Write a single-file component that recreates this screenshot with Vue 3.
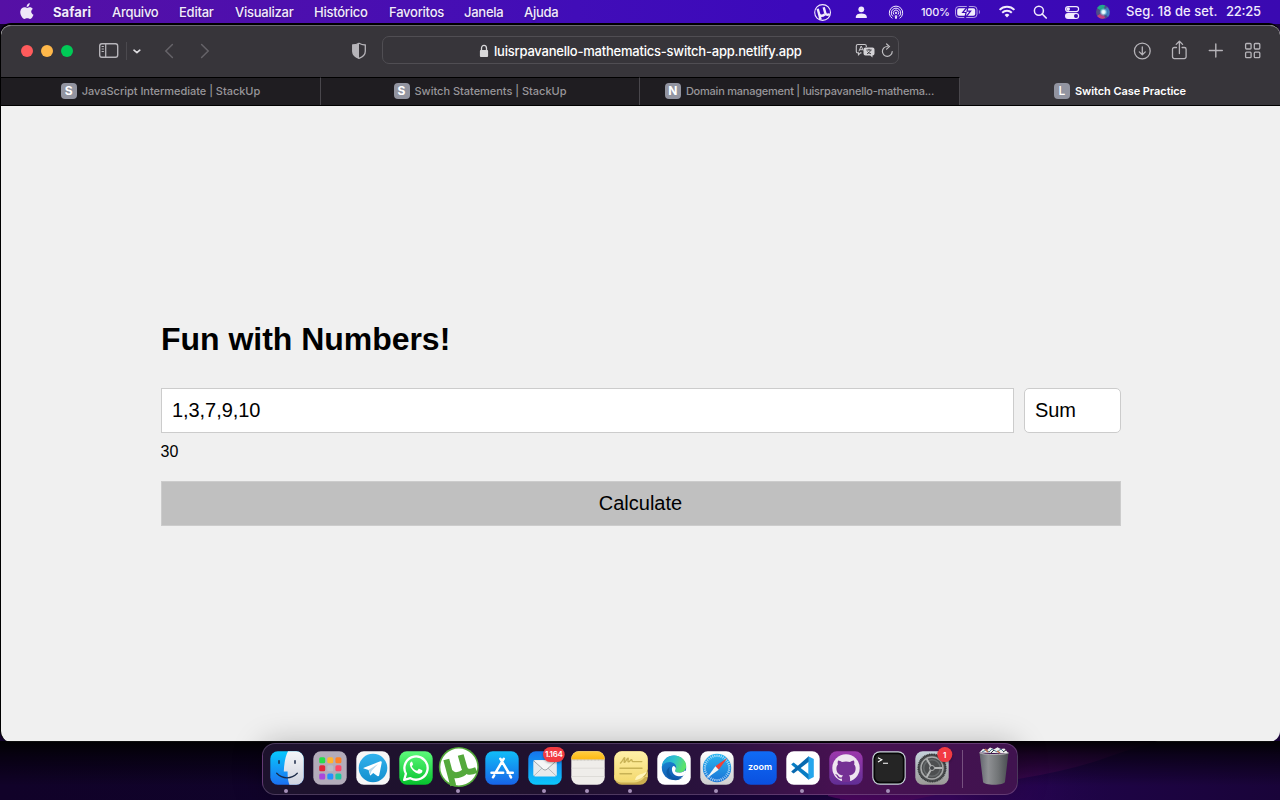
<script setup>
const menus = [
  { label: 'Safari', w: 38, app: true },
  { label: 'Arquivo', w: 46 },
  { label: 'Editar', w: 35 },
  { label: 'Visualizar', w: 58 },
  { label: 'Histórico', w: 54 },
  { label: 'Favoritos', w: 54 },
  { label: 'Janela', w: 39 },
  { label: 'Ajuda', w: 34 },
]
const tabs = [
  { letter: 'S', title: 'JavaScript Intermediate | StackUp', w: 320, ls: -0.03 },
  { letter: 'S', title: 'Switch Statements | StackUp', w: 319, ls: -0.02 },
  { letter: 'N', title: 'Domain management | luisrpavanello-mathema...', w: 319, ls: -0.23 },
  { letter: 'L', title: 'Switch Case Practice', w: 321, ls: -0.07, active: true },
]
const launch = ['#27dc4b', '#ffb52e', '#ff8228', '#e2263a', '#b9bcc4', '#ff4668', '#a948dc', '#2493fc', '#1dc7a0']
const ticks = Array.from({ length: 36 }, (_, i) => i * 10)
</script>

<template>
  <div class="desktop">
    <header class="menubar">
      <svg class="apple" width="14" height="17" viewBox="0 0 14 17">
        <path fill="#eee7f8" d="M9.9 4.3c1.2 0 2.3.7 2.9 1.6-2.4 1.4-2 4.9.7 5.9-.6 1.6-1.8 4.1-3.4 4.2-1.1 0-1.5-.7-2.9-.7-1.300 0-1.800.7-2.800.7C2.400 16-.1 11.600.3 8.400.7 5.700 2.600 4.300 4.500 4.300c1.100 0 2 .7 2.800.7.800 0 1.600-.7 2.600-.7zM9.700 0c.2 2-1.200 3.800-3 3.900C6.500 2 8 .2 9.700 0z" />
      </svg>
      <nav class="menus">
        <span v-for="m in menus" :key="m.label" :class="{ app: m.app }" :style="{ width: m.w + 'px' }">{{ m.label }}</span>
      </nav>
      <div class="status">
        <svg width="466" height="24" viewBox="814 0 466 24" fill="none" stroke="#f1ebfc">
          <circle cx="822.600" cy="12.500" r="7.900" stroke-width="1.100" />
          <path d="M817.700 8.700l2.900 10.900M819 13.800c.8 2.400 3.400 2.500 5.600.7M823.700 7.300l1.600 5.800c.4 1.600 2 2.200 4.400.9" stroke-width="2.400" />
          <g fill="#f1ebfc" stroke="none">
            <circle cx="861.300" cy="9.300" r="2.900" />
            <path d="M855.800 18v-1.200c0-2.200 2.400-3.400 5.500-3.400s5.500 1.200 5.500 3.400V18z" />
          </g>
          <g stroke-width="1">
            <path d="M892.300 18.400a6.700 6.700 0 1 1 7.400 0M892.900 16.400a4.700 4.700 0 1 1 6.200 0M894 14.600a2.700 2.700 0 1 1 4 0" />
            <circle cx="896" cy="12.900" r=".7" fill="#f1ebfc" />
            <path d="M895.200 15.800h1.600l-.4 2.700h-.8z" />
          </g>
          <text class="pct" x="921" y="16.300" textLength="29">100%</text>
          <rect x="955.500" y="6.500" width="21.500" height="11" rx="3.200" stroke-opacity=".65" />
          <rect x="957.200" y="8.200" width="18" height="7.600" rx="1.800" fill="#f1ebfc" stroke="none" />
          <path d="M968.500 5.500l-5.800 7h3.400l-1.500 6 6-7.300H967z" fill="#f1ebfc" stroke="#3b09b4" stroke-width="1.200" />
          <path d="M978.900 10v4c1.400-.4 1.400-3.600 0-4z" fill="#f1ebfc" stroke="none" opacity=".6" />
          <g stroke-width="2">
            <path d="M999.600 9.900a10.300 10.300 0 0 1 14.800 0M1002.200 12.700a6.800 6.800 0 0 1 9.600 0" />
            <path d="M1004.600 14.900a3.300 3.300 0 0 1 4.800 0L1007 17.500z" fill="#f1ebfc" stroke="none" />
          </g>
          <circle cx="1038.900" cy="10.700" r="4.500" stroke-width="1.500" />
          <path d="M1042.200 14l4 4" stroke-width="1.700" stroke-linecap="round" />
          <rect x="1065.600" y="6.600" width="13" height="5" rx="2.500" stroke-width="1.200" />
          <circle cx="1068.200" cy="9.100" r="1.800" fill="#f1ebfc" stroke="none" />
          <rect x="1065" y="13" width="14.200" height="6" rx="3" fill="#f1ebfc" stroke="none" />
          <circle cx="1076" cy="16" r="2" fill="#3b09b4" stroke="none" />
          <defs>
            <radialGradient id="siri"><stop offset="0" stop-color="#fff" /><stop offset=".35" stop-color="#d5f2fa" /><stop offset=".7" stop-color="#5bb0cc" stop-opacity=".5" /><stop offset="1" stop-color="#21325f" stop-opacity="0" /></radialGradient>
          </defs>
          <g stroke="none">
            <circle cx="1103" cy="12" r="7" fill="#4e4d88" />
            <path d="M1103 12l-6-4a7 7 0 0 1 8-2.700z" fill="#22a88e" />
            <path d="M1103 12l4-5a7 7 0 0 1 1 10z" fill="#3f7cc4" />
            <path d="M1103 12l2 6a7 7 0 0 1-8-2z" fill="#c4407f" />
            <circle cx="1103.500" cy="12" r="4.800" fill="url(#siri)" />
          </g>
          <text class="clock" x="1126" y="16.300" textLength="91.500">Seg. 18 de set.</text>
          <text class="clock" x="1226" y="16.300" textLength="35">22:25</text>
        </svg>
      </div>
    </header>

    <main class="window">
      <div class="toolbar">
        <div class="lights"><i class="red" /><i class="amber" /><i class="green" /></div>
        <svg class="left-tools" width="310" height="50" viewBox="80 26 310 50" fill="none" stroke="#b6b4b9">
          <rect x="99.700" y="43.700" width="18" height="13.600" rx="2.200" stroke-width="1.400" />
          <path d="M105.700 44v13" stroke-width="1.300" />
          <path d="M101.600 46.500h2.300M101.600 49h2.300M101.600 51.500h2.300" stroke-width="1" />
          <path d="M126.500 42v18" stroke="#4b494e" />
          <path d="M134 50.200l2.900 2.400 2.900-2.400" stroke="#dddce0" stroke-width="1.700" stroke-linecap="round" stroke-linejoin="round" />
          <path d="M172.400 44.500l-6.600 6.500 6.600 6.500M201.600 44.500l6.600 6.500-6.600 6.500" stroke="#656368" stroke-width="1.500" stroke-linecap="round" />
          <path d="M359 43.300c-1.800 1-3.800 1.600-6.300 1.700v6.200c0 3.500 2.900 5.800 6.300 7.200 3.400-1.400 6.300-3.700 6.300-7.200V45c-2.500-.1-4.500-.7-6.300-1.700z" stroke-width="1.300" />
          <path d="M359 43.300c-1.800 1-3.800 1.600-6.300 1.700v6.200c0 3.500 2.900 5.800 6.300 7.200z" fill="#b6b4b9" stroke="none" />
        </svg>
        <div class="address">
          <svg class="lock" width="10" height="14" viewBox="0 0 10 14"><path d="M2.500 7V4.200a2.500 2.900 0 0 1 5 0V7" fill="none" stroke="#d9d8da" stroke-width="1.300" /><rect x=".9" y="6" width="8.200" height="7" rx="1" fill="#d9d8da" /></svg>
          <span class="url">luisrpavanello-mathematics-switch-app.netlify.app</span>
          <svg class="addr-tools" width="40" height="18" viewBox="855 42 40 18">
            <path d="M857.800 45.500h7a1.500 1.500 0 0 1 1.500 1.500v1M861.500 53.900h-1l-2 1.900v-1.900h-.7a1.500 1.500 0 0 1-1.500-1.500V47a1.500 1.500 0 0 1 1.500-1.500" fill="none" stroke="#c7c6c9" stroke-width="1.100" />
            <path d="M858.900 52.300l2.300-5.300 2 4.500M859.900 50.700h2.600" stroke="#c7c6c9" fill="none" />
            <path d="M865.500 48.500h7a2 2 0 0 1 2 2v4a2 2 0 0 1-2 2v2l-2.300-2h-4.700a2 2 0 0 1-2-2v-4a2 2 0 0 1 2-2z" fill="#d3d2d5" />
            <path d="M866.300 51h5.400M869 49.800V51M867 54.800c2-.8 3-2 3.400-3.600M867.500 52.500c.8 1.200 2 2 3.500 2.300" stroke="#37353a" stroke-width=".9" fill="none" />
            <path d="M887.300 47.500a4.900 4.900 0 1 0 4.900 5M886.600 45l2.800 2.600-2.800 2.500" fill="none" stroke="#c0bfc2" stroke-width="1.200" stroke-linecap="round" />
          </svg>
        </div>
        <svg class="right-tools" width="140" height="50" viewBox="1130 26 140 50" fill="none" stroke="#b6b4b9" stroke-width="1.300" stroke-linecap="round" stroke-linejoin="round">
          <circle cx="1142.300" cy="51" r="7.900" />
          <path d="M1142.300 47v7.600M1139.300 51.900l3 2.900 3-2.900" />
          <path d="M1176.500 47.500h-2.200a1.800 1.800 0 0 0-1.800 1.800v7.500a1.800 1.800 0 0 0 1.800 1.800h10a1.800 1.800 0 0 0 1.800-1.800v-7.500a1.800 1.800 0 0 0-1.800-1.800h-2.200M1179.400 53.500V41.600M1176.200 44.400l3.200-3.100 3.200 3.100" />
          <path d="M1209.300 50.500h13M1215.800 44v13" stroke-width="1.400" />
          <rect x="1245.600" y="43.500" width="5.500" height="5.500" rx="1" /><rect x="1254.300" y="43.500" width="5.500" height="5.500" rx="1" />
          <rect x="1245.600" y="52.200" width="5.500" height="5.500" rx="1" /><rect x="1254.300" y="52.200" width="5.500" height="5.500" rx="1" />
        </svg>
      </div>
      <div class="tabs">
        <div v-for="t in tabs" :key="t.title" class="tab" :class="{ active: t.active }" :style="{ width: t.w + 'px', letterSpacing: t.ls + 'px' }">
          <b class="fav">{{ t.letter }}</b><span>{{ t.title }}</span>
        </div>
      </div>
      <section class="page">
        <h1>Fun with Numbers!</h1>
        <div class="row">
          <div class="field">1,3,7,9,10</div>
          <div class="select">Sum</div>
        </div>
        <p>30</p>
        <div class="calc">Calculate</div>
      </section>
    </main>

    <svg class="glow" width="1280" height="59" viewBox="0 741 1280 59">
      <defs>
        <linearGradient id="mag" gradientUnits="userSpaceOnUse" x1="828" y1="0" x2="1150" y2="0"><stop offset="0" stop-color="#520764" /><stop offset=".55" stop-color="#43085a" /><stop offset="1" stop-color="#2a0548" /></linearGradient>
        <linearGradient id="low" gradientUnits="userSpaceOnUse" x1="950" y1="0" x2="1110" y2="0"><stop offset="0" stop-color="#3a0660" /><stop offset="1" stop-color="#20044a" stop-opacity="0" /></linearGradient>
        <linearGradient id="shade" x1="0" y1="0" x2="0" y2="1"><stop offset="0" stop-color="#000" stop-opacity=".95" /><stop offset=".3" stop-color="#000" stop-opacity=".6" /><stop offset="1" stop-color="#000" stop-opacity="0" /></linearGradient>
      </defs>
      <rect x="840" y="741" width="270" height="59" fill="url(#low)" />
      <path d="M828 796q14 4 24 4h60q70-15 106-21 55-9 90-22 25-9 50-16H830z" fill="url(#mag)" opacity=".9" />
      <rect x="0" y="741" width="1280" height="45" fill="url(#shade)" />
    </svg>

    <footer class="dock">
      <div class="cell open"><svg viewBox="0 0 34 34">
        <defs>
          <linearGradient id="fb" x1="0" y1="0" x2="0" y2="1"><stop offset="0" stop-color="#08c8fd" /><stop offset="1" stop-color="#1c70f0" /></linearGradient>
          <linearGradient id="fw" x1="0" y1="0" x2="0" y2="1"><stop offset="0" stop-color="#f5f6f8" /><stop offset="1" stop-color="#cfd3df" /></linearGradient>
        </defs>
        <rect x=".3" y=".3" width="33.400" height="33.400" rx="7.500" fill="url(#fb)" />
        <path d="M18 .3h8.200a7.500 7.500 0 0 1 7.500 7.500v18.400a7.500 7.500 0 0 1-7.500 7.500h-6.800c-1.400-4-1.900-8-1.800-13.200h-3.800C14 13 15.300 5.500 18 .3z" fill="url(#fw)" />
        <path d="M9 9.700v2.600M25 9.700v2.600" stroke="#1a2a48" stroke-width="1.500" stroke-linecap="round" />
        <path d="M6.700 22.300c6 6 14.600 6 20.600 0" fill="none" stroke="#1a2a48" stroke-width="1.300" stroke-linecap="round" />
      </svg></div>
      <div class="cell"><svg viewBox="0 0 34 34">
        <rect x=".3" y=".3" width="33.400" height="33.400" rx="7.500" fill="#b3acba" />
        <rect v-for="(c, i) in launch" :key="i" :x="6.200 + (i % 3) * 8.100" :y="6.200 + Math.floor(i / 3) * 8.100" width="6" height="6" rx="1.500" :fill="c" />
      </svg></div>
      <div class="cell"><svg viewBox="0 0 34 34">
        <defs><linearGradient id="tg" x1="0" y1="0" x2="0" y2="1"><stop offset="0" stop-color="#32b2ed" /><stop offset="1" stop-color="#148fce" /></linearGradient></defs>
        <rect x=".3" y=".3" width="33.400" height="33.400" rx="7.500" fill="#f7f7f7" />
        <circle cx="17" cy="17" r="14.300" fill="url(#tg)" />
        <path d="M7.800 16.700L24.300 10.300c1-.4 1.700.2 1.400 1.500l-2.500 12.400c-.2 1-1 1.300-1.800.8l-4.200-3.100-2.200 2.200c-.5.5-1 .4-1.100-.4l-1.300-4.800-4.700-1.500c-.8-.2-.8-.5-.1-.7z" fill="#fff" />
        <path d="M12.800 18.700L22 13l-6.500 7-1 3.600z" fill="#b8d8ec" />
      </svg></div>
      <div class="cell"><svg viewBox="0 0 34 34">
        <defs><linearGradient id="wa" x1="0" y1="0" x2="0" y2="1"><stop offset="0" stop-color="#5dfa7b" /><stop offset="1" stop-color="#06c22d" /></linearGradient></defs>
        <rect x=".3" y=".3" width="33.400" height="33.400" rx="7.500" fill="url(#wa)" />
        <path d="M5.200 28.900l1.700-6.200a11.600 11.600 0 1 1 4.500 4.500z" fill="none" stroke="#fff" stroke-width="2.300" stroke-linejoin="round" />
        <path d="M12.900 10.400c-.8 0-2.600 1.600-1.900 4 .9 3.700 4.800 7.500 8.700 8.300 1.800.3 3.500-.8 3.700-2.400.1-.8-.1-.9-.6-1.200l-2.300-1.100c-.5-.2-.8-.2-1.100.2l-1 1.300c-.3.3-.6.3-1 .1-2-.9-3.500-2.200-4.400-3.900-.3-.4-.1-.7.200-1l.7-.9c.2-.3.2-.6.1-.9l-1-2.300c-.1-.2-.4-.2-.1-.2z" fill="#fff" />
      </svg></div>
      <div class="cell open"><svg viewBox="0 0 34 34">
        <circle cx="16.800" cy="16" r="20" fill="#52a839" /><circle cx="16.800" cy="16" r="18.500" fill="#fff" />
        <path d="M4.300 8.500l6.900 26M8 20.500c2 4.800 8.500 4.800 14.500.5M18.700 4l3.700 12.800c1.100 4.200 5.200 5.400 12 2.300" fill="none" stroke="#54a93b" stroke-width="6" />
      </svg></div>
      <div class="cell"><svg viewBox="0 0 34 34">
        <defs><linearGradient id="as" x1="0" y1="0" x2="0" y2="1"><stop offset="0" stop-color="#11bdf8" /><stop offset="1" stop-color="#1764e8" /></linearGradient></defs>
        <rect x=".3" y=".3" width="33.400" height="33.400" rx="7.500" fill="url(#as)" />
        <path d="M15.300 7.700L23.800 22M18.800 7.700l-8.400 14.100M25 24.500l1 1.900M9.200 24.300l-1.200 2M6.500 21.700h11.700M22.600 21.700h5.200" stroke="#fff" stroke-width="2.500" stroke-linecap="round" />
      </svg></div>
      <div class="cell open"><svg viewBox="0 0 34 34">
        <defs><linearGradient id="ml" x1="0" y1="0" x2="0" y2="1"><stop offset="0" stop-color="#1675ed" /><stop offset="1" stop-color="#0cc6fb" /></linearGradient></defs>
        <rect x=".3" y=".3" width="33.400" height="33.400" rx="7.500" fill="url(#ml)" />
        <rect x="5.300" y="9" width="23.500" height="16.500" rx="2" fill="#e8eaec" />
        <path d="M6 24.800l9-8.600M28 24.800l-9-8.600" stroke="#a9aeb3" stroke-width=".8" />
        <path d="M5.700 9.800l9.300 8.400c1.300 1.100 2.700 1.100 4 0l9.400-8.400" stroke="#8e9498" stroke-width=".8" fill="#f5f6f7" />
        <g filter="drop-shadow(0 1px 1px #0005)"><rect x="15" y="-3.900" width="21.700" height="14.800" rx="7.400" fill="#f23b42" /></g>
        <text x="25.900" y="6.300" textLength="18" class="badge">1.164</text>
      </svg></div>
      <div class="cell open"><svg viewBox="0 0 34 34">
        <defs><linearGradient id="nt" x1="0" y1="0" x2="0" y2="1"><stop offset="0" stop-color="#ffce42" /><stop offset="1" stop-color="#fdb812" /></linearGradient></defs>
        <rect x=".3" y=".3" width="33.400" height="33.400" rx="7.500" fill="#efedea" />
        <path d="M.3 8.500V7.800A7.500 7.500 0 0 1 7.800.3h18.400a7.500 7.500 0 0 1 7.500 7.500v.7z" fill="url(#nt)" />
        <path d="M.5 9h33" stroke="#a5a29a" stroke-width=".8" stroke-dasharray=".8 .6" />
        <path d="M.5 17.200h33M.5 25.500h33" stroke="#d9d7d3" stroke-width=".8" />
      </svg></div>
      <div class="cell open"><svg viewBox="0 0 34 34">
        <defs><linearGradient id="st" x1="0" y1="0" x2="0" y2="1"><stop offset="0" stop-color="#fff0a8" /><stop offset="1" stop-color="#f4da71" /></linearGradient></defs>
        <rect x=".3" y=".3" width="33.400" height="33.400" rx="7.500" fill="#cbae50" />
        <path d="M.3 24v4.500C3 31 6 31.500 9 31.500h11C27 31 32 27 33.700 20v6" fill="#ead579" />
        <path d="M.3 7.800A7.500 7.500 0 0 1 7.800.3h18.400a7.500 7.500 0 0 1 7.500 7.500V18c-2 6-7 11-14 11.500H7.500c-3.500 0-6-.8-7.200-3z" fill="url(#st)" />
        <path d="M21 29c1-4 3-5 8-6.500l4-2c-2 4-6 8-12 8.500z" fill="#fff3b9" />
        <path d="M6.500 12c2-1.500 3.200-5.300 4-5.300s-1 4.700 0 4.700c1.100 0 2.500-4.300 3.500-4.300.8 0-.8 3.800.5 3.800 1.300 0 2-2.300 2.900-2.300.8 0 .4 2 1.400 2h9M6 17.200h22M6 22.700h11.500" stroke="#c8b255" fill="none" stroke-width="1.400" stroke-linecap="round" />
      </svg></div>
      <div class="cell"><svg viewBox="0 0 34 34">
        <defs>
          <linearGradient id="e1" x1="0" y1="0" x2="1" y2=".3"><stop offset="0" stop-color="#1e9fe0" /><stop offset=".55" stop-color="#2fc5ca" /><stop offset="1" stop-color="#5be26b" /></linearGradient>
          <linearGradient id="e2" x1="0" y1="0" x2=".3" y2="1"><stop offset="0" stop-color="#1c8fdd" /><stop offset="1" stop-color="#115bb0" /></linearGradient>
        </defs>
        <rect x=".3" y=".3" width="33.400" height="33.400" rx="7.500" fill="#fff" />
        <circle cx="17" cy="16.800" r="12.200" fill="url(#e2)" />
        <path d="M4.800 16.500C4.900 9.500 10.300 4.600 17 4.600c7.200 0 12.200 5 12.200 10.500 0 4.100-3.200 6.600-6.700 6.600-4.200 0-5-1.600-4-2.900 1.700-2.500.4-6.500-4-7.500-4.500-1-8.700 1.600-9.700 5.200z" fill="url(#e1)" />
        <path d="M18.500 18.800c-1 1.300-.2 2.900 4 2.900 2.300 0 4-.9 5.300-2.200l1.500.6c-.5 1.700-1.400 3.200-2.600 4.500-4 1.800-11.800.5-11.800-6.400 0-1.400.6-2.600 1.500-3.200 2 .6 3 2.200 2.100 3.800z" fill="#fff" />
        <path d="M13 16c-2.300 3.800 0 10.700 7 11.700 2 .3 4-.3 5.700-1.400-4.500 4.300-11.200 3.300-14.300-.3-3-3.500-2.400-8 1.600-10z" fill="#0c59a4" />
      </svg></div>
      <div class="cell open"><svg viewBox="0 0 34 34">
        <defs><linearGradient id="sf" x1="0" y1="0" x2="0" y2="1"><stop offset="0" stop-color="#29b6f0" /><stop offset="1" stop-color="#1b72d6" /></linearGradient>
        <linearGradient id="sb" x1="0" y1="0" x2="0" y2="1"><stop offset="0" stop-color="#fff" /><stop offset="1" stop-color="#cecece" /></linearGradient></defs>
        <rect x=".3" y=".3" width="33.400" height="33.400" rx="7.500" fill="url(#sb)" />
        <circle cx="17" cy="17" r="14.200" fill="url(#sf)" />
        <path v-for="a in ticks" :key="a" d="M17 3.700v2.200" stroke="#e8f6ff" stroke-width=".8" :transform="`rotate(${a} 17 17)`" />
        <path d="M27.500 6.700L15.400 15.200l3.300 3.500z" fill="#f04137" /><path d="M6.500 27.500l8.900-12.300 3.300 3.500z" fill="#f3f5f6" />
      </svg></div>
      <div class="cell"><svg viewBox="0 0 34 34">
        <defs><linearGradient id="zm" x1="0" y1="0" x2="0" y2="1"><stop offset="0" stop-color="#106bf5" /><stop offset="1" stop-color="#0a50df" /></linearGradient></defs>
        <rect x=".3" y=".3" width="33.400" height="33.400" rx="7.500" fill="url(#zm)" />
        <text x="5" y="19.400" textLength="24" lengthAdjust="spacingAndGlyphs" class="zoom">zoom</text>
      </svg></div>
      <div class="cell open"><svg viewBox="0 0 34 34">
        <rect x=".3" y=".3" width="33.400" height="33.400" rx="7.500" fill="#fff" />
        <path d="M22.300 5.300L27.800 8v18l-5.500 2.700z" fill="#25a6ec" />
        <path d="M5.600 13l2-1.600 15.100 11.800v5.500L5.500 13.700c-.3-.2-.3-.5.1-.7z" fill="#087dc4" />
        <path d="M5.600 21l2 1.600 15.100-11.800V5.300L5.500 20.300c-.3.2-.3.500.1.7z" fill="#0869b0" />
      </svg></div>
      <div class="cell"><svg viewBox="0 0 34 34">
        <defs><linearGradient id="gh" x1="0" y1="0" x2="0" y2="1"><stop offset="0" stop-color="#9c38ac" /><stop offset="1" stop-color="#612e94" /></linearGradient></defs>
        <rect x=".3" y=".3" width="33.400" height="33.400" rx="7.500" fill="url(#gh)" />
        <circle cx="17" cy="17" r="13.700" fill="#eee5f0" />
        <path d="M12.900 31v-3.400c-3.200.7-4.200-.6-5.100-2.600-.4-.8-1-1.200-1.600-1.600 1.800-.3 2.600.8 3.300 1.800 1 1.400 2 1.600 3.500 1.100.1-.9.6-1.600 1.100-2-4.300-.5-6.700-2.600-6.700-6.900 0-1.600.5-2.900 1.500-3.900-.3-.9-.5-2.400.2-4.100 1.500 0 2.800.8 3.900 1.600 2.500-.7 5.500-.7 8 0 1.100-.8 2.400-1.600 3.900-1.600.7 1.700.5 3.200.2 4.100 1 1 1.500 2.300 1.500 3.900 0 4.300-2.400 6.400-6.700 6.900.7.600 1.200 1.700 1.200 3.300V31z" fill="#743094" />
      </svg></div>
      <div class="cell open"><svg viewBox="0 0 34 34">
        <rect x=".3" y=".3" width="33.400" height="33.400" rx="7.500" fill="#c9d5da" />
        <rect x="1.400" y="1.400" width="31.200" height="31.200" rx="6.500" fill="#060606" />
        <rect x="3.200" y="3.200" width="27.600" height="27.600" rx="5" fill="#252525" />
        <path d="M6 6.700l3.800 2.100L6 10.900M11 12.300h5" stroke="#fff" stroke-width="1.100" fill="none" />
      </svg></div>
      <div class="cell"><svg viewBox="0 0 34 34">
        <defs><linearGradient id="sy" x1="0" y1="0" x2="0" y2="1"><stop offset="0" stop-color="#c6d3dc" /><stop offset="1" stop-color="#9b9a97" /></linearGradient></defs>
        <rect x=".3" y=".3" width="33.400" height="33.400" rx="7.500" fill="url(#sy)" />
        <circle cx="17" cy="17" r="14" fill="#4d4f50" />
        <circle cx="17" cy="17" r="13.700" fill="none" stroke="#35383a" stroke-width="1.800" stroke-dasharray="1 .7" />
        <circle cx="17" cy="17" r="11" fill="none" stroke="#a7a9a9" stroke-width="1.500" />
        <circle cx="17" cy="17" r="8.300" fill="none" stroke="#666a6b" stroke-width="1.500" />
        <path d="M17 17h10.500M17 17l-5.300-9M17 17l-5.300 9" stroke="#b3b5b5" stroke-width="1.900" />
        <circle cx="17" cy="17" r="2.500" fill="#404345" stroke="#aeb0b0" />
        <g filter="drop-shadow(0 1px 1px #0005)"><circle cx="29.800" cy="3.600" r="7.500" fill="#f23b42" /></g>
        <text x="29.800" y="6.500" class="badge">1</text>
      </svg></div>
      <i class="sep" />
      <div class="cell trash"><svg viewBox="0 0 34 34">
        <defs><linearGradient id="tr"><stop offset="0" stop-color="#63656e" /><stop offset=".3" stop-color="#8f9194" /><stop offset=".65" stop-color="#717476" /><stop offset="1" stop-color="#484c50" /></linearGradient></defs>
        <path d="M2.500 1.500l3.600-3.700 4 1.200 3-2.500 4 1.700 3.400-2 3.300 1.700 3.600-.3 4.300 5z" fill="#eceeed" />
        <path d="M5 1l4-2 3 2 3-3 5 3 4-3 3 3" stroke="#4c7790" fill="none" /><path d="M8-2l3 3M20 0l3 2" stroke="#bb6945" stroke-width="1.500" /><path d="M14 2l3-3M26 1l3-2" stroke="#31373b" />
        <path d="M2.500 1.800c4 2.300 25 2.300 29 0l-3.500 29c-.3 4-21.700 4-22 0z" fill="url(#tr)" />
        <path d="M2.500 1.800c4 2.300 25 2.300 29 0" stroke="#b6b5b7" fill="none" />
      </svg></div>
    </footer>
  </div>
</template>

<style>
html, body { margin: 0; background: #12042c; overflow: hidden; }
</style>
<style scoped>
* { box-sizing: border-box; }
.desktop { position: relative; width: 1280px; height: 800px; overflow: hidden; font-family: Inter, "Liberation Sans", sans-serif; background: linear-gradient(90deg, #110229, #10032a 25%, #19043a 55%, #20044a 80%, #190439); display: flex; flex-direction: column; }
.menubar { height: 24px; flex: none; display: flex; background: linear-gradient(90deg, #5610a5, #4d0fae 22%, #410db8 45%, #3c09bb 62%, #3a09b1); color: #f1ebfc; font-size: 13px; font-weight: 500; line-height: 24px; }
.apple { margin: 3px 0 0 20px; flex: none; }
.menus { display: flex; gap: 21px; margin-left: 19px; width: 761px; text-shadow: 0 1px 2px #0004; }
.menus span { white-space: nowrap; letter-spacing: -.25px; }
.menus .app { font-weight: 700; letter-spacing: .1px; }
.status { height: 24px; }
.status svg, .dock svg { display: block; }
.pct { fill: #f1ebfc; stroke: none; font-size: 11px; font-weight: 500; }
.clock { fill: #f1ebfc; stroke: none; font-size: 13px; font-weight: 500; }
.window { height: 719px; flex: none; margin-top: -1px; border: 1px solid #000; border-top-width: 2px; border-right: 0; border-bottom: 0; border-radius: 11px; overflow: hidden; background: #f0f0f0; display: flex; flex-direction: column; position: relative; }
.toolbar { height: 52px; flex: none; background: #37353a; display: flex; border-top: 1px solid #6d6a70; border-radius: 10px 10px 0 0; }
.lights { display: flex; gap: 8px; width: 79px; padding: 19px 0 0 20px; flex: none; }
.lights i { width: 12px; height: 12px; border-radius: 50%; flex: none; }
.red { background: #ff5b5c; } .amber { background: #ffb84a; } .green { background: #00ca56; }
.left-tools { width: 310px; margin-right: -8px; flex: none; }
.address { width: 517px; height: 28px; margin-top: 10px; border: 1px solid #504e53; border-radius: 7px; display: flex; align-items: center; padding-left: 96px; flex: none; }
.lock { flex: none; margin-top: 1px; }
.url { width: 309px; margin-left: 5px; font-size: 13px; font-weight: 500; color: #fff; white-space: nowrap; letter-spacing: -.22px; margin-top: 1px; }
.addr-tools { margin-left: 52px; flex: none; }
.right-tools { margin-left: 231px; flex: none; }
.tabs { display: flex; height: 29px; flex: none; background: #37353a; border-bottom: 1px solid #000; }
.tab { height: 28px; display: flex; justify-content: center; align-items: center; gap: 5px; padding-bottom: 2px; color: #98969a; font-size: 11px; font-weight: 450; background: #1f1d21; border-top: 1px solid #000; border-right: 1px solid #49474c; white-space: nowrap; flex: none; }
.tab:nth-child(3) { box-sizing: content-box; height: 25px; }
.tab.active { background: #37353a; color: #fff; font-weight: 600; border-color: transparent; }
.fav { width: 16px; height: 16px; border-radius: 4px; background: #9294a0; color: #fff; font-size: 12px; line-height: 16px; text-align: center; font-weight: 700; letter-spacing: 0; }
.tab.active .fav { font-weight: 500; }
.page { flex: 1; padding: 213px 159px 0 160px; font-family: "Liberation Sans", Arial, sans-serif; color: #000; }
h1 { margin: 0; font-size: 32px; line-height: 40px; height: 69px; letter-spacing: -.03px; }
.row { display: flex; gap: 10px; font-size: 20px; }
.field, .select { height: 45px; border: 1px solid #ccc; background: #fff; padding-left: 10px; line-height: 43px; flex: none; letter-spacing: -.06px; }
.field { width: 853px; }
.select { width: 97px; border-radius: 5px; }
p { margin: 9px 0 0 -.5px; font-size: 16px; line-height: 20px; height: 39px; }
.calc { width: 960px; height: 45px; background: #c0c0c0; border: 1px solid #ccc; text-align: center; font-size: 20px; line-height: 43px; padding-right: 1px; }
.glow { position: absolute; left: 0; top: 741px; }
.dock { position: absolute; left: 262px; top: 743px; width: 756px; height: 52px; border: 1px solid rgba(180, 150, 200, .3); border-radius: 13px; background: linear-gradient(90deg, #1d122d, #20112f 40%, #2b123f 60%, #481152 77%, #40134f); display: flex; padding-left: 2px; box-shadow: 0 0 30px rgba(0, 0, 0, .25); }
.cell { width: 43px; height: 50px; flex: none; position: relative; display: flex; justify-content: center; }
.cell svg { width: 34px; height: 34px; margin-top: 7px; overflow: visible; }
.open::after { content: ""; position: absolute; left: 19px; top: 45px; width: 4px; height: 4px; border-radius: 50%; background: #a690b9; }
.sep { width: 1px; height: 38px; margin: 6px 0 0 9px; background: #76507f; flex: none; }
.trash { margin-left: 9px; }
.badge { fill: #fff; font-size: 8px; font-weight: 600; text-anchor: middle; }
.zoom { fill: #fff; font-size: 9px; font-weight: 600; }
</style>
